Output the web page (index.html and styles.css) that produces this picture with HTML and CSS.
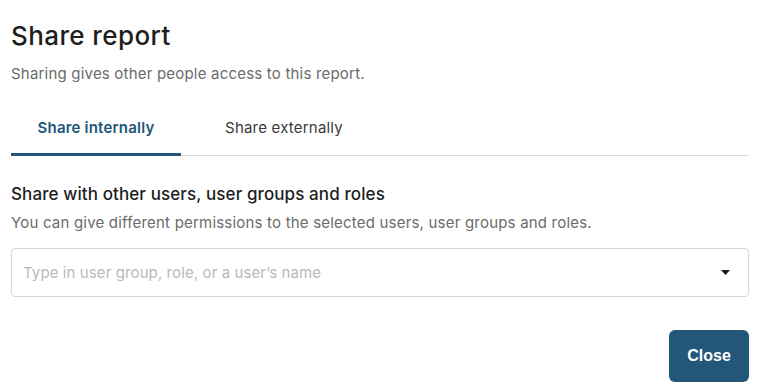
FILE: index.html
```html
<!DOCTYPE html>
<html lang="en">
<head>
  <meta charset="UTF-8" />
  <title>Share report</title>
  <link rel="stylesheet" href="styles.css">
</head>
<body>
  <div class="dialog">
    <h1 class="dialog-title">Share report</h1>
    <p class="dialog-sub">Sharing gives other people access to this report.</p>

    <div class="tabs">
      <div class="tab active">Share internally</div>
      <div class="tab">Share externally</div>
    </div>

    <h2 class="section-title">Share with other users, user groups and roles</h2>
    <p class="section-sub">You can give different permissions to the selected users, user groups and roles.</p>

    <div class="picker">
      <span class="picker-placeholder">Type in user group, role, or a user’s name</span>
      <svg class="picker-caret" width="9" height="5" viewBox="0 0 9 5"><path d="M0 0h9L4.5 5z" fill="#1a1a1a"/></svg>
    </div>

    <div class="actions">
      <button class="btn-close">Close</button>
    </div>
  </div>
</body>
</html>
```

FILE: styles.css
```css
body {
  margin: 0;
  background: #fff;
  font-family: 'Inter', sans-serif;
  color: #1d1d1f;
}

.dialog {
  padding: 21px 15px 0 11px;
}

.dialog-title {
  margin: 0;
  font-size: 26px;
  font-weight: 500;
  letter-spacing: 0.4px;
  line-height: 30px;
  color: #1e1e1e;
}

.dialog-sub {
  margin: 13px 0 0;
  font-size: 15px;
  letter-spacing: 0.2px;
  line-height: 20px;
  color: #6b6b6b;
}

.tabs {
  display: flex;
  margin-top: 19px;
  border-bottom: 1px solid #dcdcdc;
}

.tab {
  width: 170px;
  padding: 15px 0 15px;
  text-align: center;
  font-size: 15px;
  letter-spacing: 0.2px;
  line-height: 20px;
  color: #3a3a3a;
  margin-bottom: -1px;
  border-bottom: 3px solid transparent;
}

.tab.active {
  color: #22577a;
  font-weight: 600;
  border-bottom-color: #22577a;
}

.tab + .tab {
  width: 206px;
}

.section-title {
  margin: 26px 0 0;
  font-size: 17px;
  font-weight: 500;
  letter-spacing: 0.1px;
  line-height: 24px;
  color: #1e1e1e;
}

.section-sub {
  margin: 7px 0 0;
  font-size: 15px;
  letter-spacing: 0.2px;
  line-height: 20px;
  color: #6b6b6b;
}

.picker {
  display: flex;
  align-items: center;
  justify-content: space-between;
  margin-top: 15px;
  height: 47px;
  padding: 0 18px 0 11px;
  border: 1px solid #d3d7de;
  border-radius: 4px;
}

.picker-placeholder {
  font-size: 15px;
  letter-spacing: 0.1px;
  color: #b9b9b9;
}

.actions {
  display: flex;
  justify-content: flex-end;
  margin-top: 33px;
}

.btn-close {
  width: 80px;
  height: 52px;
  border: none;
  border-radius: 6px;
  background: #22577a;
  color: #fff;
  font-family: 'Liberation Sans', Arial, sans-serif;
  font-size: 16px;
  font-weight: 700;
}
```
